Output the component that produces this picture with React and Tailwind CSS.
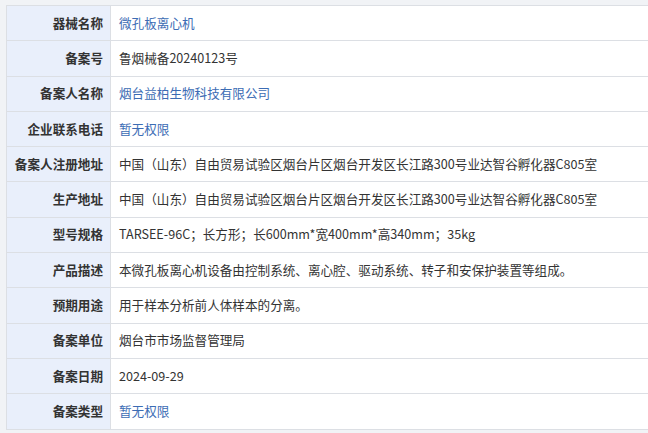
const rows = [
  { label: "器械名称", value: "微孔板离心机", link: true },
  { label: "备案号", value: "鲁烟械备20240123号" },
  { label: "备案人名称", value: "烟台益柏生物科技有限公司", link: true },
  { label: "企业联系电话", value: "暂无权限", link: true },
  { label: "备案人注册地址", value: "中国（山东）自由贸易试验区烟台片区烟台开发区长江路300号业达智谷孵化器C805室" },
  { label: "生产地址", value: "中国（山东）自由贸易试验区烟台片区烟台开发区长江路300号业达智谷孵化器C805室" },
  { label: "型号规格", value: "TARSEE-96C；长方形；长600mm*宽400mm*高340mm；35kg" },
  { label: "产品描述", value: "本微孔板离心机设备由控制系统、离心腔、驱动系统、转子和安保护装置等组成。" },
  { label: "预期用途", value: "用于样本分析前人体样本的分离。" },
  { label: "备案单位", value: "烟台市市场监督管理局" },
  { label: "备案日期", value: "2024-09-29" },
  { label: "备案类型", value: "暂无权限", link: true },
];

export default function App() {
  return (
    <div
      className="min-h-[433px] w-[648px] overflow-hidden bg-[#f1f3f6] pl-[6px] pt-[5px]"
      style={{ fontFamily: '"Noto Sans CJK SC", "Noto Sans", sans-serif' }}
    >
      <table className="w-[660px] border-collapse text-[12.6px] text-[#333]">
        <tbody>
          {rows.map((r) => (
            <tr key={r.label} className="h-[35.3px]">
              <th className="w-[104px] whitespace-nowrap border border-[#dcdfe4] bg-[#e9effb] pr-[7px] text-right font-bold">
                {r.label}
              </th>
              <td
                className={`whitespace-nowrap border border-[#dcdfe4] bg-white pl-[8px] ${
                  r.link ? "text-[#3c6cb4]" : "text-[#333]"
                }`}
              >
                {r.value}
              </td>
            </tr>
          ))}
        </tbody>
      </table>
    </div>
  );
}
